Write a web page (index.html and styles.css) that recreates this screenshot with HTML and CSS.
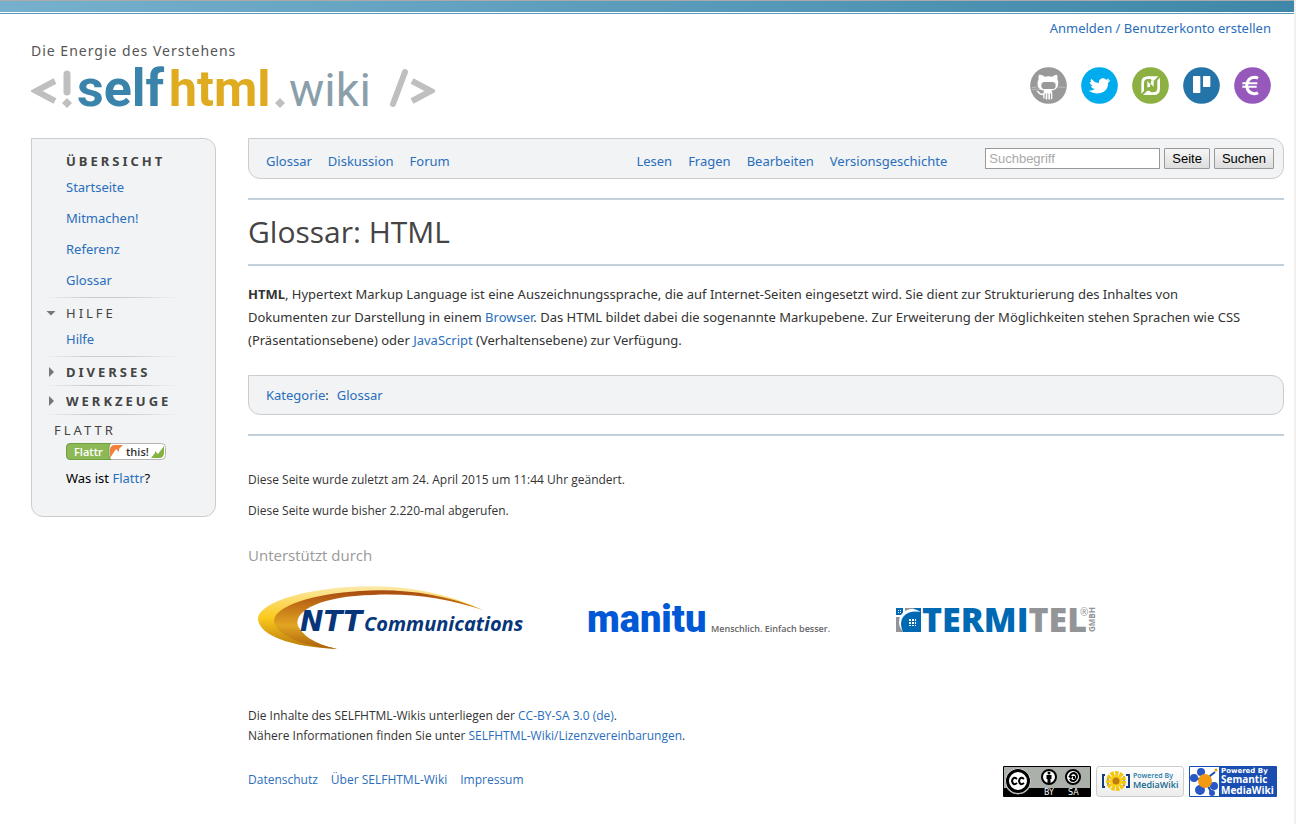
FILE: index.html
```html
<!DOCTYPE html>
<html lang="de">
<head>
  <meta charset="UTF-8">
  <title>Glossar: HTML</title>
  <link rel="stylesheet" href="styles.css">
</head>
<body>
  <div class="top-bar"></div>

  <header class="page-header">
    <a class="logo" href="#">
      <span class="tagline">Die Energie des Verstehens</span>
      <svg width="404" height="66" viewBox="0 -11 404 66">
        <g fill="none" stroke="#bfbfbf" stroke-width="6">
          <path d="M24 14 5 24 24 34"/>
          <path d="M36 7V25" stroke-width="7" stroke-linecap="round"/>
          <path d="M362 37 374 5" stroke-linecap="round"/>
          <path d="M381 14 400 24 381 34"/>
        </g>
        <path d="M36 31l5 5-5 5-5-5zM249 31l5 5-5 5-5-5z" fill="#bfbfbf"/>
        <text class="logo-self" x="46" y="39">self</text>
        <text class="logo-html" x="138" y="39">html</text>
        <text class="logo-wiki" x="258" y="39">wiki</text>
      </svg>
    </a>
    <div class="header-right">
      <a href="#">Anmelden / Benutzerkonto erstellen</a>
      <div class="social">
        <a href="#" aria-label="GitHub">
          <svg width="37" height="37" viewBox="0 0 111 111">
            <circle cx="55.500" cy="55.500" r="55" fill="#999"/>
            <path d="M6 62q20-5 28 0M105 62q-20-5-28 0M6 68q20-3 28 0" stroke="#ccc" stroke-width="2" fill="none"/>
            <path d="M30 23q8 0 14 6 11-3 23 0 6-6 14-6 3 7 1 14 5 7 2 18-3 14-20 16 3 3 3 9v14q0 4-4 2V79h-3v17q-3 4-5 0V79h-3v17q-3 4-5 0V79h-3v15q-4 3-4-1V84q-10 2-15-5-2-5-7-7 8-2 12 5 3 4 10 2 0-5 3-8-18-2-20-16-2-11 3-18-2-7 1-14z" fill="#fff"/>
            <rect x="34" y="45" width="43" height="21" rx="10" fill="#999"/>
          </svg>
        </a>
        <a href="#" aria-label="Twitter">
          <svg width="37" height="37" viewBox="0 0 111 111">
            <circle cx="55.500" cy="55.500" r="55" fill="#00aced"/>
            <path d="M31 35q8 11 22 14 0-12 10-15 8-2 13 4l9-4q-2 5-5 7l8-2q-2 5-7 8 1 19-14 28-20 10-45-4 13 1 19-5-10-2-11-9h5q-9-5-9-12l5 1q-5-6 0-11z" fill="#fff"/>
          </svg>
        </a>
        <a href="#" aria-label="Flattr">
          <svg width="37" height="37" viewBox="0 0 111 111">
            <circle cx="55.500" cy="55.500" r="55" fill="#8db043"/>
            <path d="M28 80V47q0-19 20-19h31L66 41l-9-1V36h-9q-12 0-12 12v24zM84 32v33q0 19-20 19H33l13-13 9 1v4h9q12 0 12-12V40z" fill="#fff"/>
            <path d="M46 61V42l11 12V41l8-1v19L54 49v11z" fill="#fff"/>
          </svg>
        </a>
        <a href="#" aria-label="Trello">
          <svg width="37" height="37" viewBox="0 0 111 111">
            <circle cx="55.500" cy="55.500" r="55" fill="#2474a9"/>
            <rect x="30" y="27" width="22" height="51" rx="2" fill="#fff"/>
            <rect x="60" y="27" width="22" height="33" rx="2" fill="#fff"/>
          </svg>
        </a>
        <a href="#" aria-label="Spenden">
          <svg width="37" height="37" viewBox="0 0 111 111">
            <circle cx="55.500" cy="55.500" r="55" fill="#9659bb"/>
            <path d="M72 34q-5-3-11-3-21 1-23 25 2 23 23 24 6 0 11-3" stroke="#fff" stroke-width="9" fill="none"/>
            <path d="M25 49h45M25 59h43" stroke="#fff" stroke-width="6"/>
          </svg>
        </a>
      </div>
    </div>
  </header>

  <div class="layout">
    <nav class="sidebar">
      <section class="portal">
        <h3>Übersicht</h3>
        <ul>
          <li><a href="#">Startseite</a></li>
          <li><a href="#">Mitmachen!</a></li>
          <li><a href="#">Referenz</a></li>
          <li><a href="#">Glossar</a></li>
        </ul>
      </section>
      <details class="portal" open>
        <summary>Hilfe</summary>
        <ul>
          <li><a href="#">Hilfe</a></li>
        </ul>
      </details>
      <details class="portal">
        <summary>Diverses</summary>
      </details>
      <details class="portal">
        <summary>Werkzeuge</summary>
      </details>
      <section class="portal flattr">
        <h3>Flattr</h3>
        <a class="flattr-button" href="#">
          <svg width="100" height="17" viewBox="0 0 100 17">
            <rect x="0.500" y="0.500" width="99" height="16" rx="4" fill="#fff" stroke="#b4b4b4"/>
            <path d="M45 .5H4Q.5.500.5 4v9q0 3.500 3.500 3.500h41q-2-1-2-4V4q0-3 2-3.500z" fill="#8cb956" stroke="#72a043"/>
            <path d="M44 15V7q0-5 5-5h8l-4 4v3l-3-3z" fill="#f0803c"/>
            <path d="M98 3v7q0 5-5 5h-8l4-5v-2l3 3z" fill="#83b441"/>
            <text class="flattr-text flattr-name" x="8" y="13">Flattr</text>
            <text class="flattr-text" x="60" y="13">this!</text>
          </svg>
        </a>
        <p>Was ist <a href="#">Flattr</a>?</p>
      </section>
    </nav>

    <main class="content">
      <div class="toolbar">
        <ul class="tabs">
          <li><a href="#">Glossar</a></li>
          <li><a href="#">Diskussion</a></li>
          <li><a href="#">Forum</a></li>
        </ul>
        <ul class="tabs views">
          <li><a href="#">Lesen</a></li>
          <li><a href="#">Fragen</a></li>
          <li><a href="#">Bearbeiten</a></li>
          <li><a href="#">Versionsgeschichte</a></li>
        </ul>
        <form class="search">
          <input type="search" placeholder="Suchbegriff" aria-label="Suchbegriff">
          <button type="button">Seite</button>
          <button type="submit">Suchen</button>
        </form>
      </div>

      <h1>Glossar: HTML</h1>

      <p class="article"><b>HTML</b>, Hypertext Markup Language ist eine Auszeichnungssprache, die auf Internet-Seiten eingesetzt wird. Sie dient zur Strukturierung des Inhaltes von Dokumenten zur Darstellung in einem <a href="#">Browser</a>. Das HTML bildet dabei die sogenannte Markupebene. Zur Erweiterung der Möglichkeiten stehen Sprachen wie CSS (Präsentationsebene) oder <a href="#">JavaScript</a> (Verhaltensebene) zur Verfügung.</p>

      <div class="categories">
        <span><a href="#">Kategorie</a>:</span>
        <a href="#">Glossar</a>
      </div>

      <footer class="page-footer">
        <p>Diese Seite wurde zuletzt am 24. April 2015 um 11:44 Uhr geändert.</p>
        <p>Diese Seite wurde bisher 2.220-mal abgerufen.</p>

        <h2>Unterstützt durch</h2>
        <div class="sponsors">
          <a href="#">
            <svg width="276" height="70" viewBox="0 0 276 70">
              <defs>
                <linearGradient id="gold" x1="0" y1="0" x2="0" y2="1">
                  <stop offset="0" stop-color="#fbe9a8"/>
                  <stop offset="0.500" stop-color="#fbca1d"/>
                  <stop offset="1" stop-color="#b9770a"/>
                </linearGradient>
                <linearGradient id="bronze" x1="0" y1="0" x2="0" y2="1">
                  <stop offset="0" stop-color="#a84a10"/>
                  <stop offset="0.600" stop-color="#e2a521"/>
                  <stop offset="1" stop-color="#a8600c"/>
                </linearGradient>
              </defs>
              <path d="M235 27C190 6 145 1 100 4 45 8 10 22 10 36c1 16 32 28 79 30C64 60 48 52 45 42 42 26 75 11 125 9c40-1 75 5 110 18z" fill="url(#gold)"/>
              <path d="M235 27C195 10 150 5 112 8 65 11 26 23 26 38c2 13 25 25 63 28C64 60 55 52 50 43 45 27 75 13 125 12c40-2 75 4 110 15z" fill="url(#bronze)"/>
              <text class="ntt-name" x="52" y="48">NTT</text>
              <text class="ntt-com" x="116" y="48">Communications</text>
            </svg>
          </a>
          <a href="#">
            <svg width="244" height="70" viewBox="0 0 244 70">
              <text class="manitu-name" x="-1" y="49">manitu</text>
              <text class="manitu-claim" x="123" y="49">Menschlich. Einfach besser.</text>
            </svg>
          </a>
          <a href="#">
            <svg width="204" height="70" viewBox="0 0 204 70">
              <path d="M0 34h5v15H0zM9 25h9v4H9zM0 49v-3h12v3z" fill="#929497"/>
              <path d="M0 25h7v7H0zM18 25h7v4h-7z" fill="#0069b4"/>
              <circle cx="16" cy="39" r="13" fill="#fff"/>
              <path d="M7 49Q3 40 7 34q6-7 18-5v20z" fill="#0069b4"/>
              <path d="M13 36h2v2h-2zM16 36h2v2h-2zM19 36h1v2h-1zM13 39h2v2h-2zM16 39h2v2h-2zM19 39h1v2h-1zM13 42h2v1h-2zM16 42h2v1h-2zM19 42h1v1h-1zM2 27h1v1H2zM4 27h1v1H4zM2 29h1v1H2zM4 29h1v1H4z" fill="#fff"/>
              <text class="termitel-name" x="26" y="49">TERMI<tspan>TEL</tspan></text>
              <text class="termitel-mark registered" x="184" y="33">®</text>
              <text class="termitel-mark" transform="translate(199 49) rotate(-90)">GMBH</text>
            </svg>
          </a>
        </div>

        <div class="license">
          Die Inhalte des SELFHTML-Wikis unterliegen der <a href="#">CC-BY-SA 3.0 (de)</a>.<br>
          Nähere Informationen finden Sie unter <a href="#">SELFHTML-Wiki/Lizenzvereinbarungen</a>.
        </div>

        <div class="bottom-row">
          <ul class="places">
            <li><a href="#">Datenschutz</a></li>
            <li><a href="#">Über SELFHTML-Wiki</a></li>
            <li><a href="#">Impressum</a></li>
          </ul>
          <div class="badges">
            <a href="#">
              <svg width="88" height="31" viewBox="0 0 88 31">
                <rect width="88" height="31" rx="1" fill="#000"/>
                <path d="M1 1h86v21H1z" fill="#abb1aa"/>
                <circle cx="15" cy="15" r="13" fill="#fff" stroke="#abb1aa"/>
                <circle cx="15" cy="15" r="10.500" fill="#fff" stroke="#000" stroke-width="3"/>
                <path d="M14 13q-4-3-5 2 1 5 5 2M21 13q-4-3-5 2 1 5 5 2" fill="none" stroke="#000" stroke-width="2"/>
                <circle cx="46" cy="11" r="7" fill="#fff" stroke="#000" stroke-width="2"/>
                <circle cx="46" cy="7" r="1.500"/>
                <path d="M43.500 9h5v4h-1v4h-3v-4h-1z"/>
                <circle cx="70" cy="11" r="7" fill="#fff" stroke="#000" stroke-width="2"/>
                <path d="M67 10q1-3 4-3 3 1 3 4-1 4-4 4-2 0-3-2" fill="none" stroke="#000" stroke-width="2"/>
                <path d="M65 10h5l-2 3zM70 10h2v3h-2z"/>
                <text class="cc-text" x="41" y="29">BY</text>
                <text class="cc-text" x="65" y="29">SA</text>
              </svg>
            </a>
            <a href="#">
              <svg width="88" height="31" viewBox="0 0 88 31">
                <defs>
                  <linearGradient id="badge" x1="0" y1="0" x2="0" y2="1">
                    <stop offset="0" stop-color="#fff"/>
                    <stop offset="1" stop-color="#ececec"/>
                  </linearGradient>
                </defs>
                <rect x="0.500" y="0.500" width="87" height="30" rx="3" fill="url(#badge)" stroke="#ccc"/>
                <path d="M9 9H7v12h2M30 9h3v12h-3" fill="none" stroke="#123a80" stroke-width="2"/>
                <path d="M12 10v10M28 10v10" stroke="#123a80"/>
                <circle cx="20" cy="15" r="7" fill="none" stroke="#f5c50c" stroke-width="6" stroke-dasharray="3 1"/>
                <circle cx="20" cy="15" r="6" fill="#f7d117"/>
                <circle cx="20" cy="15" r="3.500" fill="#c27c0e"/>
                <text class="mw-small" x="37" y="12">Powered By</text>
                <text class="mw-name" x="37" y="22">MediaWiki</text>
              </svg>
            </a>
            <a href="#">
              <svg width="88" height="31" viewBox="0 0 88 31">
                <rect width="88" height="31" rx="1" fill="#194daf"/>
                <path d="M1 1h29v29H1z" fill="#fff"/>
                <path d="M16 14 13 6M16 14 5 12M16 14 26 20M16 14 11 24M16 14 22 26M16 14 26 6" stroke="#194daf" stroke-width="2"/>
                <g fill="#2858c5">
                  <circle cx="12" cy="6" r="4"/>
                  <circle cx="5" cy="12" r="4"/>
                  <circle cx="11" cy="24" r="5"/>
                  <circle cx="25" cy="20" r="4"/>
                  <circle cx="23" cy="27" r="3"/>
                </g>
                <circle cx="16" cy="15" r="7" fill="#f39a13"/>
                <circle cx="27" cy="4" r="1.500" fill="#f39a13"/>
                <text class="smw-small" x="32" y="7">Powered By</text>
                <text class="smw-name" x="32" y="17">Semantic</text>
                <text class="smw-name" x="32" y="28">MediaWiki</text>
              </svg>
            </a>
          </div>
        </div>
      </footer>
    </main>
  </div>
</body>
</html>
```

FILE: styles.css
```css
* {
  box-sizing: border-box;
}

body {
  min-height: 100vh;
  margin: 0;
  border-right: 2px solid #f0f0f0;
  font-family: "Noto Sans", "Open Sans", sans-serif;
  font-size: 13px;
  line-height: 20px;
  color: #333;
  background: #fff;
}

a {
  color: #2a6ebb;
  text-decoration: none;
}

a:hover {
  text-decoration: underline;
}

svg {
  display: block;
}

ul {
  margin: 0;
  padding: 0;
  list-style: none;
}

.top-bar {
  height: 14px;
  border-top: 1px solid #aaa;
  border-bottom: 1px solid #5a9aba;
  background: linear-gradient(to right, #76b0cd, #3f87a8) no-repeat;
  background-size: 100% 11px;
}

/* Header */
.page-header {
  display: flex;
  justify-content: space-between;
  height: 124px;
  padding: 4px 23px 0 31px;
}

.logo {
  padding-top: 28px;
}

.logo:hover {
  text-decoration: none;
}

.tagline {
  display: block;
  font-size: 14px;
  line-height: 10px;
  letter-spacing: 1px;
  color: #555;
}

.logo-self {
  font: bold 52px Roboto, sans-serif;
  fill: #3a83aa;
}

.logo-html {
  font: bold 50px Roboto, sans-serif;
  fill: #dfab20;
}

.logo-wiki {
  font: 47px Roboto, sans-serif;
  fill: #8b9fab;
}

.header-right {
  display: flex;
  flex-direction: column;
  align-items: flex-end;
  gap: 29px;
}

.social {
  display: flex;
  gap: 14px;
}

.layout {
  display: flex;
  align-items: flex-start;
  gap: 32px;
  padding: 0 10px 0 31px;
}

/* Sidebar */
.sidebar {
  flex: 0 0 185px;
  padding: 7px 36px 25px 15px;
  border: 1px solid #ccc;
  border-radius: 0 12px 12px 12px;
  background: #f1f3f5;
}

.portal {
  padding: 5px 0 3px 19px;
  border-top: 1px solid;
  border-image: linear-gradient(to right, transparent, #ccc 30%, #ccc 60%, transparent) 1;
}

.portal:first-child {
  border: 0;
}

.portal h3,
.portal summary {
  margin: 0;
  font-size: 13px;
  font-weight: bold;
  letter-spacing: 3px;
  text-transform: uppercase;
  color: #444;
}

.portal summary {
  display: flex;
  align-items: center;
  margin-left: -17px;
  cursor: pointer;
}

.portal summary::before {
  content: '';
  width: 5px;
  height: 10px;
  margin-right: 12px;
  background: #777;
  clip-path: polygon(0 0, 100% 50%, 0 100%);
}

.portal[open] summary {
  margin-left: -20px;
  font-weight: normal;
}

.portal[open] summary::before {
  width: 10px;
  height: 5px;
  margin-right: 10px;
  clip-path: polygon(0 0, 100% 0, 50% 100%);
}

.portal ul {
  display: flex;
  flex-direction: column;
  gap: 11px;
  padding: 6px 0 4px;
}

.flattr h3 {
  margin-left: -12px;
  font-weight: normal;
}

.flattr-button {
  display: block;
  margin: 3px 0 8px;
}

.flattr-text {
  font: 600 11px "Open Sans", sans-serif;
  fill: #333;
}

.flattr-name {
  fill: #fff;
}

.flattr p {
  margin: 0;
  color: #000;
}

/* Content */
.content {
  flex: 1;
  min-width: 0;
}

.toolbar {
  display: flex;
  align-items: flex-start;
  height: 41px;
  padding: 9px 9px 0 17px;
  border: 1px solid #ccc;
  border-radius: 0 12px 12px 12px;
  background: #f1f3f5;
}

.tabs {
  display: flex;
  gap: 16px;
  padding-top: 3px;
}

.views {
  margin-left: auto;
}

.search {
  display: flex;
  gap: 4px;
  margin-left: 38px;
}

.search input {
  width: 175px;
  height: 21px;
  padding: 1px 3px;
  border: 1px solid #999;
  font: 13px "Liberation Sans", sans-serif;
  background: #fff;
  appearance: none;
}

.search input::placeholder {
  color: #a9a9a9;
}

.search button {
  height: 21px;
  padding: 0 7px;
  border: 1px solid #999;
  border-radius: 1px;
  font: 13px "Liberation Sans", sans-serif;
  color: #000;
  background: linear-gradient(#f6f6f6, #ddd);
}

h1 {
  margin: 19px 0 17px;
  padding: 12px 0;
  border: solid #c4d0d9;
  border-width: 2px 0;
  font-family: "Open Sans", sans-serif;
  font-size: 30px;
  font-weight: normal;
  line-height: 40px;
  color: #444;
}

.article {
  margin: 0;
  padding-right: 36px;
  line-height: 23px;
}

.categories {
  display: flex;
  gap: 8px;
  margin: 23px 0 19px;
  padding: 9px 17px;
  border: 1px solid #ccc;
  border-radius: 0 12px 12px 12px;
  background: #f1f3f5;
}

/* Footer */
.page-footer {
  padding-top: 34px;
  border-top: 2px solid #c4d0d9;
  font-family: "Open Sans", sans-serif;
  font-size: 12px;
}

.page-footer p {
  margin: 0 0 11px;
}

.page-footer h2 {
  margin: 24px 0 18px;
  font-size: 15px;
  font-weight: normal;
  color: #999;
}

.sponsors {
  display: flex;
  gap: 64px;
}

.ntt-name {
  font: italic bold 28px "DejaVu Sans", sans-serif;
  fill: #06357a;
}

.ntt-com {
  font: italic bold 20px "Open Sans", sans-serif;
  fill: #06357a;
}

.manitu-name {
  font: 900 38px Roboto, sans-serif;
  fill: #0058d6;
}

.manitu-claim {
  font: 600 9px "Open Sans", sans-serif;
  fill: #666;
}

.termitel-name {
  font: 800 34px "Open Sans", sans-serif;
  fill: #0069b4;
}

.termitel-name tspan,
.termitel-mark {
  fill: #929497;
}

.termitel-mark {
  font: bold 8px "Open Sans", sans-serif;
}

.registered {
  font: 10px "Open Sans", sans-serif;
}

.license {
  margin: 53px 0 20px;
}

.bottom-row {
  display: flex;
  justify-content: space-between;
  padding-right: 7px;
}

.places {
  display: flex;
  gap: 13px;
  padding-top: 4px;
}

.badges {
  display: flex;
  gap: 5px;
}

.cc-text {
  font: 8px "DejaVu Sans", sans-serif;
  fill: #fff;
}

.mw-small {
  font: 600 7px "Open Sans", sans-serif;
  fill: #1c7ba8;
}

.mw-name {
  font: 600 9px "Open Sans", sans-serif;
  fill: #14698f;
}

.smw-small {
  font: bold 7px "DejaVu Sans", sans-serif;
  fill: #fff;
}

.smw-name {
  font: bold 10px "Open Sans", sans-serif;
  fill: #fff;
}
```
